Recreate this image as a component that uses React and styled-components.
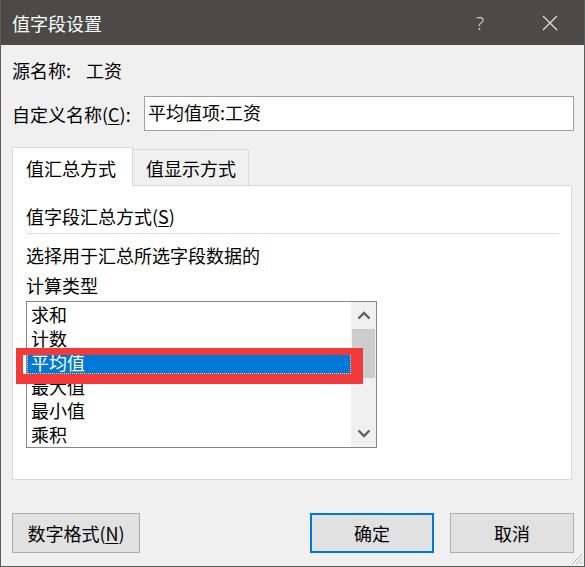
import React from 'react'
import styled, { createGlobalStyle } from 'styled-components'

const GlobalStyle = createGlobalStyle`
  html, body {
    margin: 0;
    padding: 0;
    background: #f0f0f0;
  }
  * {
    box-sizing: border-box;
  }
`

const FONT = `"Noto Sans CJK SC", "Noto Sans", sans-serif`

// Window frame
const Dialog = styled.div`
  position: relative;
  width: 585px;
  height: 567px;
  background: #f0f0f0;
  border: 1px solid #5c5c5c;
  border-top: none;
  font-family: ${FONT};
  font-size: 18px;
  color: #000;
  overflow: hidden;
`

const TitleBar = styled.div`
  display: flex;
  align-items: center;
  height: 45px;
  margin: 0 -1px;
  padding-left: 12px;
  padding-right: 27px;
  background: #4b4a48;
  color: #fff;
`

const Title = styled.div`
  flex: 1;
  font-size: 18px;
  line-height: 24px;
`

const HelpMark = styled.span`
  font-family: "Noto Sans", sans-serif;
  font-weight: 300;
  font-size: 19px;
  color: #d8d8d8;
  margin-right: 58px;
`

const Body = styled.div`
  padding: 0 10px 0 11px;
`

const Row = styled.div`
  display: flex;
  align-items: center;
  margin-top: ${p => p.$top}px;
  line-height: 22px;
`

const Label = styled.div`
  flex: 0 0 ${p => p.$width || 'auto'};
  white-space: nowrap;
`

const Key = styled.span`
  text-decoration: underline;
  text-underline-offset: 2px;
`

const TextInput = styled.div`
  flex: 1;
  height: 35px;
  border: 1px solid #a0a0a0;
  background: #fff;
  padding: 0 3px;
  line-height: 31px;
`

// Tabs
const TabStrip = styled.div`
  display: flex;
  align-items: flex-end;
  height: 38px;
  margin-top: 16px;
  margin-right: 2px;
`

const Tab = styled.div`
  position: relative;
  z-index: ${p => (p.$active ? 1 : 0)};
  width: ${p => p.$width}px;
  height: ${p => (p.$active ? 39 : 36)}px;
  margin-bottom: ${p => (p.$active ? -1 : 0)}px;
  padding-left: 13px;
  background: ${p => (p.$active ? '#fff' : '#f0f0f0')};
  border: 1px solid #d9d9d9;
  border-bottom: none;
  border-left: ${p => (p.$active ? '1px solid #d9d9d9' : 'none')};
  line-height: ${p => (p.$active ? 40 : 36)}px;
  white-space: nowrap;
`

const Panel = styled.div`
  height: 295px;
  margin-right: 2px;
  padding: 0 12px 0 13px;
  background: #fff;
  border: 1px solid #d9d9d9;
`

const PanelHeading = styled.div`
  margin-top: 18px;
  line-height: 24px;
`

const Divider = styled.div`
  height: 1px;
  margin-top: 5px;
  background: #dcdcdc;
`

const Hint = styled.div`
  margin-top: 6px;
  line-height: 30px;
`

// List box
const ListBox = styled.div`
  position: relative;
  display: flex;
  width: 351px;
  height: 147px;
  margin-top: 1px;
  border: 1px solid #828790;
  background: #fff;
`

const Items = styled.div`
  flex: 1;
  overflow: hidden;
`

const Item = styled.div`
  height: 24px;
  padding-left: 4px;
  line-height: 24px;
  color: ${p => (p.$selected ? '#fff' : '#000')};
  background: ${p => (p.$selected ? '#0078d7' : 'transparent')};
  outline: ${p => (p.$selected ? '1px dotted #ffd27f' : 'none')};
  outline-offset: -1px;
`

const ScrollBar = styled.div`
  display: flex;
  flex-direction: column;
  width: 25px;
  background: #f0f0f0;
`

const ScrollArrow = styled.div`
  display: flex;
  align-items: center;
  justify-content: center;
  height: 27px;
`

const ScrollTrack = styled.div`
  flex: 1;
  padding: 0 1px;
`

const Thumb = styled.div`
  height: 49px;
  background: #cdcdcd;
`

const Highlight = styled.div`
  position: absolute;
  left: -11px;
  top: 46px;
  width: 347px;
  height: 36px;
  border-style: solid;
  border-color: #f23a3a;
  border-width: 7px 12px 10px 7px;
  pointer-events: none;
`

// Footer
const Footer = styled.div`
  display: flex;
  align-items: center;
  margin-top: 33px;
`

const Button = styled.div`
  width: ${p => p.$width}px;
  height: 40px;
  margin-left: ${p => p.$gap || 0}px;
  display: flex;
  align-items: center;
  justify-content: center;
  background: #e1e1e1;
  border: ${p => (p.$primary ? '2px solid #0078d7' : '1px solid #adadad')};
`

const Spacer = styled.div`
  flex: 1;
`

const Grip = styled.svg`
  position: absolute;
  right: 1px;
  bottom: 1px;
`

const Chevron = ({ up }) => (
  <svg width="14" height="9" viewBox="0 0 14 9">
    <path
      d={up ? 'M1.5 7.5 L7 2 L12.5 7.5' : 'M1.5 1.5 L7 7 L12.5 1.5'}
      fill="none"
      stroke="#606060"
      strokeWidth="2.4"
    />
  </svg>
)

const items = ['求和', '计数', '平均值', '最大值', '最小值', '乘积']

const App = () => {
  return (
    <Dialog>
      <GlobalStyle />
      <TitleBar>
        <Title>值字段设置</Title>
        <HelpMark>?</HelpMark>
        <svg width="16" height="16" viewBox="0 0 16 16">
          <path d="M1 1 L15 15 M15 1 L1 15" stroke="#e2e2e2" strokeWidth="1.2" />
        </svg>
      </TitleBar>
      <Body>
        <Row $top={14}>
          <Label $width="74px">源名称:</Label>
          <Label>工资</Label>
        </Row>
        <Row $top={15}>
          <Label $width="132px">自定义名称(<Key>C</Key>):</Label>
          <TextInput>平均值项:工资</TextInput>
        </Row>
        <TabStrip>
          <Tab $active $width={121}>值汇总方式</Tab>
          <Tab $width={116}>值显示方式</Tab>
        </TabStrip>
        <Panel>
          <PanelHeading>值字段汇总方式(<Key>S</Key>)</PanelHeading>
          <Divider />
          <Hint>
            选择用于汇总所选字段数据的
            <br />
            计算类型
          </Hint>
          <ListBox>
            <Items>
              {items.map((t, i) => (
                <Item key={t} $selected={i === 2}>{t}</Item>
              ))}
            </Items>
            <ScrollBar>
              <ScrollArrow><Chevron up /></ScrollArrow>
              <ScrollTrack><Thumb /></ScrollTrack>
              <ScrollArrow><Chevron /></ScrollArrow>
            </ScrollBar>
            <Highlight />
          </ListBox>
        </Panel>
        <Footer>
          <Button $width={128}>数字格式(<Key>N</Key>)</Button>
          <Spacer />
          <Button $primary $width={124}>确定</Button>
          <Button $width={124} $gap={16}>取消</Button>
        </Footer>
      </Body>
      <Grip width="13" height="13" viewBox="0 0 13 13">
        <path d="M12 2 L2 12 M12 6 L6 12 M12 10 L10 12" stroke="#b5b5b5" strokeWidth="1" />
      </Grip>
    </Dialog>
  )
}

export default App
